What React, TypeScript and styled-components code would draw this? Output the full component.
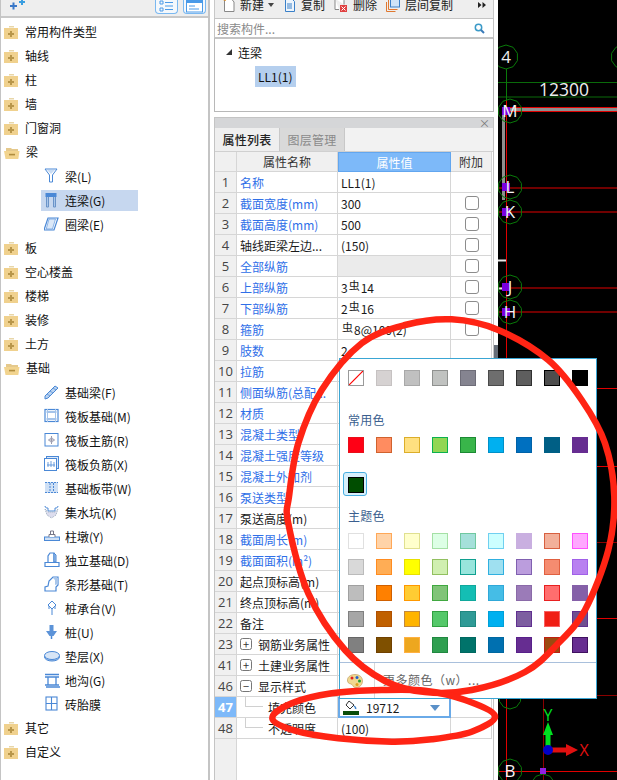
import React from "react";
import styled, { createGlobalStyle } from "styled-components";

const Global = createGlobalStyle`
  html, body { margin: 0; padding: 0; background: #fff; }
  body { font-family: "Noto Sans CJK SC", "Liberation Sans", sans-serif; font-size: 12px; color: #111; }
  * { box-sizing: border-box; }
`;

const Page = styled.div`
  position: relative; display: flex; width: 617px; height: 780px; overflow: hidden; background: #fff;
`;

/* left tree */
const LeftPanel = styled.div`
  width: 210px; flex: none; display: flex; flex-direction: column;
  border-left: 1px solid #c4c4c4; border-right: 2px solid #c4c4c4;
`;
const LeftBar = styled.div`
  height: 18px; flex: none; display: flex; align-items: flex-start; background: #eeeeee;
  border-bottom: 2px solid #c8c8c8; padding: 0 2px 0 6px; overflow: hidden;
`;
const BarButton = styled.div`
  width: 23px; height: 15px; margin-top: -1px; border: 1px solid #7ab8f0; border-top: none;
  border-radius: 0 0 4px 4px; background: #f4f8fc; margin-left: 5px; display: flex; align-items: center; justify-content: center;
`;
const Spring = styled.div`flex: 1;`;
const TreeList = styled.div`padding-top: 2px; display: flex; flex-direction: column;`;
const FolderRow = styled.div`
  height: 24px; display: flex; align-items: center; padding-left: 3px; gap: 6px; line-height: 24px; white-space: nowrap;
`;
const LeafRow = styled.div<{ $sel?: boolean }>`
  height: 24px; display: flex; align-items: center; padding-left: 40px; white-space: nowrap;
  & > span { display: flex; align-items: center; height: 21px; width: 97px; gap: 5px; padding-left: 3px; background: ${(p) => (p.$sel ? "#c6d7ef" : "transparent")}; }
`;

const Folder = ({ open }: { open?: boolean }) =>
  open ? (
    <svg width="16" height="13" viewBox="0 0 16 13">
      <path d="M2 2h5l1 1h6v2H2z" fill="#e5c98c" />
      <path d="M0 5h15.500l-1.200 8H1.500z" fill="#f2d48f" />
      <rect x="5" y="7.800" width="6" height="1.600" fill="#b08d3e" />
    </svg>
  ) : (
    <svg width="15" height="13" viewBox="0 0 15 13">
      <path d="M5 0h5v1.500H5z" fill="#e8d6a8" />
      <rect x="0" y="2" width="14" height="11" fill="#f0d18e" />
      <rect x="6" y="5" width="2" height="6" fill="#b8964a" />
      <rect x="4" y="7" width="6" height="2" fill="#b8964a" />
    </svg>
  );

const B = "#4a88d6";
const leafIcons: Record<string, React.ReactNode> = {
  liang: <><path d="M1 1h12L8.500 7v7h-3V7z" fill="none" stroke={B} /><path d="M3 2h8L7 6z" fill="#c9dcf3" /></>,
  lian: <><rect x="1.500" y="1" width="11" height="4" fill={B} /><path d="M2.500 5v10h2V5M9.500 5v10h2V5" fill="#a9c6ea" stroke="#6a93c8" /></>,
  quan: <><path d="M4 2h10l-4 12H0z" fill="none" stroke={B} strokeWidth="1.200" /><path d="M5 3h6.500l-3 10H2.200z" fill="#dbe8f8" stroke={B} strokeWidth=".6" /></>,
  jcl: <><path d="M1 12L11 2l3 2L4 14l-3 1z" fill="#b9d2f0" stroke={B} /><path d="M3 10l3 2M6 7l3 2M9 4l3 2" stroke={B} strokeWidth=".7" /></>,
  fb: <><rect x="1" y="1.500" width="13" height="12" fill="#fff" stroke={B} strokeWidth="1.200" /><rect x="3.500" y="4" width="8" height="7" fill="none" stroke={B} /><path d="M1 4h13M1 11h13M3.500 1v13M11.500 1v13" stroke="#a5c4ea" /></>,
  zj: <><rect x="1" y="1.500" width="13" height="12.500" fill="#fff" stroke={B} /><path d="M7.500 4v8M4 8h7" stroke="#99a" strokeWidth="1" /><circle cx="7.500" cy="8" r="2" fill="none" stroke="#aab" /></>,
  fj: <><rect x="2.500" y="0.500" width="12" height="12" fill="#dbe8f8" stroke={B} /><rect x="0.500" y="2.500" width="12" height="12" fill="#fff" stroke={B} /><path d="M4 6v5M7 5v6M10 6v5M3 9h8" stroke={B} strokeWidth=".8" /></>,
  bd: <><rect x="1" y="2" width="13" height="11" fill="#cfe0f5" /><path d="M1 2.500h13M1 12.500h13M6 3v9M9.500 3v9" stroke={B} strokeDasharray="2 1" /></>,
  jsk: <><path d="M1 2c0 2 2 2 3 2v3h7V4c1 0 3 0 3-2" fill="none" stroke={B} /><path d="M1 5l2 6 4.500 3L12 11l2-6-3 3H4z" fill="#dde" stroke="#9ab" strokeDasharray="1 1" /></>,
  zd: <><rect x="0.500" y="9" width="15" height="3.500" fill="#cfe0f5" stroke={B} /><path d="M5 9V6.500h6V9M6.500 6V3h3v3" fill="#fff" stroke="#778" /></>,
  dl: <><path d="M1 10.500h14v4H1z" fill="#fff" stroke={B} strokeWidth="1.200" /><path d="M4 10V4l2-3h4v9" fill="#fff" stroke={B} strokeWidth="1.200" /><path d="M10 1l2 2v7h-2z" fill="#a9c6ea" stroke={B} /></>,
  tx: <><path d="M1 15v-4l3-1 1-5 4-4h5v8l-2 2v4z" fill="#fff" stroke={B} strokeWidth="1.200" /><path d="M9 2l2 2v5l3-1V2z" fill="#a9c6ea" /></>,
  cct: <><path d="M8 1l4 4-4 4-4-4z" fill="#fff" stroke={B} /><path d="M5 6v3M8 8v7M11 6v3M5 6l3 3 3-3" fill="none" stroke={B} /></>,
  z: <><path d="M5.500 1h4v6H13l-3.500 5h-4L2 7h3.500z" fill="#5c93d8" /><path d="M7.500 12v3" stroke={B} strokeWidth="1.500" /></>,
  dc: <><ellipse cx="8" cy="9" rx="7.500" ry="4" fill="#a9c6ea" stroke={B} /><ellipse cx="8" cy="7.500" rx="7.500" ry="4" fill="#d7e5f6" stroke={B} /></>,
  dg: <><path d="M1 2.500h14M2 15h14" stroke={B} strokeWidth="1.500" /><path d="M1 5h14M4 5v8M12 5v8M1 13h14" fill="none" stroke={B} strokeWidth="1.300" /></>,
  ztm: <><rect x="2" y="1" width="11" height="13" fill="#fff" stroke={B} strokeWidth="1.100" /><path d="M2 7.500h11M7.500 1v13" stroke={B} strokeWidth="1.100" /></>,
};

const tree: [string, string?, string?, boolean?][] = [
  ["f", "常用构件类型"], ["f", "轴线"], ["f", "柱"], ["f", "墙"], ["f", "门窗洞"], ["o", "梁"],
  ["l", "梁(L)", "liang"], ["l", "连梁(G)", "lian", true], ["l", "圈梁(E)", "quan"],
  ["f", "板"], ["f", "空心楼盖"], ["f", "楼梯"], ["f", "装修"], ["f", "土方"], ["o", "基础"],
  ["l", "基础梁(F)", "jcl"], ["l", "筏板基础(M)", "fb"], ["l", "筏板主筋(R)", "zj"], ["l", "筏板负筋(X)", "fj"],
  ["l", "基础板带(W)", "bd"], ["l", "集水坑(K)", "jsk"], ["l", "柱墩(Y)", "zd"], ["l", "独立基础(D)", "dl"],
  ["l", "条形基础(T)", "tx"], ["l", "桩承台(V)", "cct"], ["l", "桩(U)", "z"], ["l", "垫层(X)", "dc"],
  ["l", "地沟(G)", "dg"], ["l", "砖胎膜", "ztm"], ["f", "其它"], ["f", "自定义"],
];

/* centre column */
const Middle = styled.div`
  width: 280px; margin-left: 4px; flex: none; display: flex; flex-direction: column;
`;
const Toolbar = styled.div`
  height: 18px; flex: none; display: flex; align-items: center; background: #eeeeee; padding: 0 4px 8px 7px;
  border-left: 1px solid #c8c8c8; border-right: 1px solid #c8c8c8; font-size: 12px; color: #222;
`;
const Tool = styled.div<{ $gap?: number }>`display: flex; align-items: center; gap: ${(p) => p.$gap ?? 4}px; margin-right: 9px; line-height: 12px; white-space: nowrap;`;
const Caret = styled.span`
  width: 0; height: 0; border-left: 3.500px solid transparent; border-right: 3.500px solid transparent; border-top: 4px solid #444;
`;
const More = styled.svg`margin-left: auto; margin-right: 3px; flex: none;`;
const Search = styled.div`
  height: 19px; flex: none; display: flex; align-items: center; justify-content: space-between; padding: 0 8px 0 2px;
  border: 1px solid #c4c4c4; border-bottom: none; color: #8a8a8a; background: #fff;
`;
const TreeBox = styled.div`
  height: 75px; flex: none; border: 1px solid #b8b8b8; border-top: 2px solid #c4c4c4; padding-top: 2px; background: #fff;
`;
const BeamHead = styled.div`display: flex; align-items: center; height: 22px; gap: 6px; padding-left: 11px;`;
const Tri = styled.span`
  width: 0; height: 0; border-left: 6px solid transparent; border-bottom: 6px solid #333;
`;
const BeamItem = styled.div`
  margin: 3px 0 0 40px; width: 41px; height: 21px; line-height: 21px; padding-left: 3px; background: #b5cfee; white-space: nowrap;
`;
const PropPanel = styled.div`
  flex: 1; margin-top: 5px; display: flex; flex-direction: column; border: 1px solid #c4c4c4; border-bottom: none; min-height: 0;
`;
const PanelTitle = styled.div`
  height: 10px; flex: none; background: #d5d6d8; display: flex; align-items: center; justify-content: flex-end; padding-right: 3px;
  font-size: 11px; color: #777; line-height: 10px;
`;
const Tabs = styled.div`height: 24px; flex: none; display: flex; background: #f2f2f2; border-bottom: 1px solid #d0d0d0;`;
const Tab = styled.div<{ $active?: boolean }>`
  width: 65px; height: 23px; display: flex; align-items: center; justify-content: center;
  background: ${(p) => (p.$active ? "#efefef" : "#d9d9d9")}; color: ${(p) => (p.$active ? "#222" : "#8a8a8a")};
  font-weight: ${(p) => (p.$active ? 500 : 400)}; border-right: 1px solid #c8c8c8; letter-spacing: .3px;
`;
const GridRow = styled.div<{ $h: number }>`
  height: ${(p) => p.$h}px; flex: none; display: grid; grid-template-columns: 22px 101px 113px 41px; width: 277px;
`;
const Cell = styled.div`
  display: flex; align-items: center; border-right: 1px solid #d6d6d6; border-bottom: 1px solid #d6d6d6; white-space: nowrap; overflow: hidden; min-width: 0;
`;
const HeadCell = styled(Cell)<{ $on?: boolean }>`
  justify-content: center; background: ${(p) => (p.$on ? "#7db9f9" : "#f0f0f0")}; color: ${(p) => (p.$on ? "#fff" : "#333")};
  ${(p) => (p.$on ? "border: 1px solid #62a6ef;" : "")}
`;
const NumCell = styled(Cell)<{ $on?: boolean }>`
  justify-content: center; background: ${(p) => (p.$on ? "#7db9f9" : "#f0f0f0")}; color: ${(p) => (p.$on ? "#fff" : "#444")};
  font-size: 13px; font-weight: ${(p) => (p.$on ? 700 : 400)}; font-family: "Open Sans", sans-serif;
`;
const NameCell = styled(Cell)<{ $blue?: boolean; $indent: number }>`
  color: ${(p) => (p.$blue ? "#2f6fe8" : "#1a1a1a")}; padding-left: ${(p) => p.$indent}px; gap: 6px; position: relative;
`;
const ValCell = styled(Cell)<{ $grey?: boolean; $selected?: boolean }>`
  padding-left: 3px; background: ${(p) => (p.$grey ? "#ebebeb" : "#fff")}; color: #1a1a1a;
  ${(p) => (p.$selected ? "border: 2px solid #6aaae8; padding-left: 3px; gap: 7px; position: relative;" : "")}
`;
const AddCell = styled(Cell)`justify-content: center; padding-left: 1px;`;
const Check = styled.span`
  width: 14px; height: 14px; border: 1px solid #8c8c8c; border-radius: 3px; background: #fff;
`;
const Expand = styled.span`
  width: 12px; height: 12px; border: 1px solid #777; border-radius: 2.500px; font-size: 11px; line-height: 9px; display: flex; align-items: center; justify-content: center; color: #333; flex: none;
`;
const Steel = styled.span`font-size: 11px; position: relative; top: -3px; margin: 0 1px;`;
const Branch = styled.span<{ $tall?: boolean }>`
  position: absolute; left: 8px; top: ${(p) => (p.$tall ? -14 : -1)}px; width: 18px; height: ${(p) => (p.$tall ? 24 : 11)}px;
  border-left: 1px solid #d0d0d0; border-bottom: 1px solid #d0d0d0;
`;
const DownArrow = styled.span`
  position: absolute; right: 9px; top: 6px; width: 0; height: 0; border-left: 5px solid transparent; border-right: 5px solid transparent; border-top: 6px solid #5a90c8;
`;
const Filler = styled.div`
  flex: 1; width: 22px; background: #f0f0f0; border-right: 1px solid #d6d6d6;
`;
const Gutter = styled.div`
  width: 4px; flex: none; background: #fff; padding-top: 345px;
`;
const GutterBar = styled.div`height: 20px; background: #666e78;`;

const Canvas = styled.div`flex: 1; background: #000; min-width: 0; height: 780px;`;

/* colour popup */
const Popup = styled.div`
  position: absolute; left: 339px; top: 358px; width: 258px; height: 341px; background: #fff;
  border: 1px solid #3aa6d4; padding-top: 11px;
`;
const SwatchRow = styled.div<{ $mt?: number }>`
  display: grid; grid-template-columns: repeat(9, 16px); column-gap: 12px; padding-left: 8px; margin-top: ${(p) => p.$mt ?? 0}px; height: 16px;
`;
const Swatch = styled.div<{ $fill: string; $line: string }>`
  width: 16px; height: 16px; background: ${(p) => p.$fill}; border: 1px solid ${(p) => p.$line}; position: relative; overflow: hidden;
`;
const Picked = styled.div`
  position: absolute; left: -5px; top: -5px; width: 24px; height: 24px; border: 1px solid #48aee0; border-radius: 3px; background: #d7effb; z-index: 0;
`;
const SwatchSlot = styled.div`position: relative; width: 16px; height: 16px;`;
const PickedFill = styled(Swatch)`position: relative; z-index: 1;`;
const GroupLabel = styled.div<{ $mt: number }>`
  height: 16px; line-height: 16px; padding-left: 8px; margin-top: ${(p) => p.$mt}px; color: #3b5f8f; letter-spacing: .2px;
`;
const PopFoot = styled.div`
  margin-top: 9px; height: 36px; border-top: 1px solid #a9c0dc; display: flex; align-items: stretch;
`;
const FootIcon = styled.div`
  width: 35px; flex: none; border-right: 1px solid #d8d8d8; display: flex; align-items: center; justify-content: center; padding-right: 4px;
`;
const FootText = styled.div`padding: 0 0 2px 8px; display: flex; align-items: center; color: #666; letter-spacing: .5px; white-space: nowrap;`;

const Marks = styled.svg`position: absolute; left: 0; top: 0; width: 617px; height: 780px; pointer-events: none;`;

const top9: [string, string][] = [
  ["#d6d2d2", "#c6c2c2"], ["#c0c0c0", "#a8a8a8"], ["#c0c2c0", "#8f918f"], ["#858490", "#6e6d78"], ["#6e6e6e", "#4a4a4a"],
  ["#5e5e5e", "#303030"], ["#4d4d4d", "#000"], ["#000", "#000"],
];
const common: [string, string][] = [
  ["#ff0015", "#e8101a"], ["#ff8c60", "#d0622e"], ["#ffe080", "#dcae2a"], ["#92d655", "#0bb14f"], ["#39b54a", "#1b8a33"],
  ["#00b0f0", "#0090c8"], ["#0070c0", "#0062a8"], ["#005f85", "#005f85"], ["#662d91", "#662d91"],
];
const theme: [string, string][][] = [
  [["#fff", "#e0e0e0"], ["#ffd3a8", "#ffa858"], ["#ffffcc", "#e0e090"], ["#ddffe6", "#a5e0a5"], ["#a5e0da", "#70c8a0"], ["#ccffff", "#70d0f0"], ["#c9afe0", "#c9afe0"], ["#f2b09a", "#d86040"], ["#ffa8ff", "#ff50ff"]],
  [["#d9d9d9", "#bbb"], ["#ffad55", "#ff8c20"], ["#ffff00", "#e8e000"], ["#d0efb0", "#92c060"], ["#98e5dc", "#10a090"], ["#9fe0f0", "#30b0e0"], ["#bb9ddd", "#8060b0"], ["#f58c70", "#e06040"], ["#b880f0", "#a060e8"]],
  [["#bdbdbd", "#a0a0a0"], ["#ff8000", "#d06000"], ["#ffcc33", "#ff9800"], ["#80c478", "#40a840"], ["#14beb4", "#10a89c"], ["#45bde6", "#30a8d8"], ["#9b7bb8", "#8a6aa8"], ["#ff6e6e", "#e82020"], ["#8560a8", "#8560a8"]],
  [["#a6a6a6", "#808080"], ["#c06000", "#b05000"], ["#ffb400", "#c08840"], ["#55c86a", "#30a040"], ["#2f9a96", "#208880"], ["#00b0f0", "#00a0d8"], ["#7d5ea0", "#602f90"], ["#f01e14", "#f86060"], ["#6f5090", "#603090"]],
  [["#808080", "#666"], ["#7f5000", "#704000"], ["#eda71f", "#ffb040"], ["#2f9f50", "#208840"], ["#00736a", "#006860"], ["#0070b0", "#0068a0"], ["#662d91", "#58208a"], ["#9c4a10", "#c02010"], ["#662d91", "#401060"]],
];

type Row = {
  n: string; name: string; blue?: boolean; val?: React.ReactNode; check?: boolean; grey?: boolean;
  expand?: "+" | "-"; branch?: "short" | "tall"; selected?: boolean;
};
const S = () => <Steel>虫</Steel>;
const rows: Row[] = [
  { n: "1", name: "名称", blue: true, val: "LL1(1)" },
  { n: "2", name: "截面宽度(mm)", blue: true, val: "300", check: true },
  { n: "3", name: "截面高度(mm)", blue: true, val: "500", check: true },
  { n: "4", name: "轴线距梁左边...", val: "(150)", check: true },
  { n: "5", name: "全部纵筋", blue: true, grey: true, check: true },
  { n: "6", name: "上部纵筋", blue: true, val: <span>3<S />14</span>, check: true },
  { n: "7", name: "下部纵筋", blue: true, val: <span>2<S />16</span>, check: true },
  { n: "8", name: "箍筋", blue: true, val: <span><S />8@100(2)</span>, check: true },
  { n: "9", name: "肢数", blue: true, val: "2" },
  { n: "10", name: "拉筋", blue: true },
  { n: "11", name: "侧面纵筋(总配...", blue: true },
  { n: "12", name: "材质", blue: true },
  { n: "13", name: "混凝土类型", blue: true },
  { n: "14", name: "混凝土强度等级", blue: true },
  { n: "15", name: "混凝土外加剂", blue: true },
  { n: "16", name: "泵送类型", blue: true },
  { n: "17", name: "泵送高度(m)" },
  { n: "18", name: "截面周长(m)", blue: true },
  { n: "19", name: "截面面积(m²)", blue: true },
  { n: "20", name: "起点顶标高(m)" },
  { n: "21", name: "终点顶标高(m)" },
  { n: "22", name: "备注" },
  { n: "23", name: "钢筋业务属性", expand: "+" },
  { n: "41", name: "土建业务属性", expand: "+" },
  { n: "46", name: "显示样式", expand: "-" },
  { n: "47", name: "填充颜色", branch: "short", selected: true },
  { n: "48", name: "不透明度", branch: "tall", val: "(100)" },
];

const ring = (cx: number, cy: number, r: number) =>
  Array.from({ length: 10 }, (_, i) => {
    const a = (Math.PI * 2 * i) / 10 - Math.PI / 2;
    return `${(cx + r * Math.cos(a)).toFixed(1)},${(cy + r * Math.sin(a)).toFixed(1)}`;
  }).join(" ");

/* closed smooth curve through hand-traced points (the reviewer's red pen marks) */
const smooth = (p: [number, number][]) => {
  const n = p.length;
  let d = `M${p[0][0]} ${p[0][1]}`;
  for (let i = 0; i < n; i++) {
    const [a, b, c, e] = [p[(i - 1 + n) % n], p[i], p[(i + 1) % n], p[(i + 2) % n]];
    d += `C${(b[0] + (c[0] - a[0]) / 6).toFixed(1)} ${(b[1] + (c[1] - a[1]) / 6).toFixed(1)} ${(c[0] - (e[0] - b[0]) / 6).toFixed(1)} ${(c[1] - (e[1] - b[1]) / 6).toFixed(1)} ${c[0]} ${c[1]}`;
  }
  return d + "Z";
};
const bigMark: [number, number][] = [
  [451.7, 319.3], [498.3, 330], [548.3, 360], [581.7, 400], [605, 443.3], [614.3, 496.7], [608.3, 550], [585, 610],
  [558.3, 643.3], [525, 672], [471.7, 690], [425, 692], [385, 681], [345, 650], [308.3, 593.3], [288.3, 523.3],
  [289, 496.7], [298.3, 443.3], [321.7, 390], [361.7, 343.3], [405, 325],
];
const smallMark: [number, number][] = [
  [495, 716], [471.7, 731.7], [431.7, 739.3], [391.7, 741.7], [338.3, 738.3], [295, 730.7], [272.3, 718.3],
  [291.7, 703.3], [331.7, 693.3], [381.7, 690], [425, 690.7], [465, 700],
];

const RED = "#e00000";
const GREEN = "#0a7a0a";
const LABEL = "Open Sans, sans-serif";

const Grid = () => {
  const axes: [number, number, string][] = [
    [510, 111, "M"], [510, 187, "L"], [510, 212, "K"], [510, 287, "J"], [510, 312, "H"],
  ];
  return (
    <svg width="119" height="780" viewBox="498 0 119 780" style={{ display: "block" }}>
      <path d="M498 82.500H617M498 97H617" stroke="#0a6a0a" strokeWidth="1" />
      <path d="M506.500 69V100" stroke={GREEN} />
      <path d="M506.500 100V780" stroke={RED} />
      <path d="M506 107.500H617M506 111.500H617M498 188H617M498 212H617M498 288H617M498 312H617M506 388.500H617M506 466.500H617M506 618.500H617M498 771.500H617" stroke={RED} />
      <path d="M506 542.500H617M506 695.500H617" stroke="#8a0000" />
      <path d="M543.500 696V780" stroke="#8a0000" />
      <path d="M503.500 200V109.500H617" fill="none" stroke="#8e8e8e" strokeWidth="3" />
      <path d="M498 260.500H506M498 288.500H506" stroke="#e8e8e8" strokeWidth="2" />
      <polygon points={ring(506, 57, 12)} fill="none" stroke={GREEN} />
      <polygon points={ring(623, 57, 12)} fill="none" stroke={GREEN} />
      <text x="506" y="63" fontFamily={LABEL} fontSize="17" fill="#eee" textAnchor="middle">4</text>
      <text x="564" y="96" fontFamily={LABEL} fontSize="17.500" fill="#eee" textAnchor="middle">12300</text>
      {axes.map(([x, y, t]) => (
        <g key={t}>
          <rect x="502" y={y - 4} width="8" height="8" fill="#7a00e0" />
          <polygon points={ring(x, y, 12)} fill="none" stroke={GREEN} />
          <text x={x} y={y + 6} fontFamily={LABEL} fontSize="17" fill="#f4f4f4" textAnchor="middle">{t}</text>
        </g>
      ))}
      <polygon points={ring(510, 771, 12)} fill="none" stroke={GREEN} />
      <text x="510" y="777" fontFamily={LABEL} fontSize="17" fill="#f4f4f4" textAnchor="middle">B</text>
      <polygon points={ring(510, 698, 11)} fill="none" stroke={GREEN} />
      <polygon points={ring(543, 786, 12)} fill="none" stroke={GREEN} />
      <rect x="540" y="768" width="6" height="6" fill="#9020e0" />
      <path d="M548 748V730" stroke="#00e020" strokeWidth="5" />
      <path d="M543 735L548 722l5 13z" fill="#00e020" />
      <path d="M552 750H568" stroke="#e01010" strokeWidth="5" />
      <path d="M566 744l12 6-12 6z" fill="#e01010" />
      <circle cx="548" cy="750" r="5" fill="#0000c8" />
      <text x="548" y="721" fontFamily={LABEL} fontSize="16" fill="#00e020" textAnchor="middle">Y</text>
      <text x="584" y="756" fontFamily={LABEL} fontSize="16" fill="#e01010" textAnchor="middle">X</text>
    </svg>
  );
};

export default function App() {
  return (
    <Page>
      <Global />
      <LeftPanel>
        <LeftBar>
          <svg width="22" height="12" viewBox="0 0 22 12" style={{ marginLeft: 1, marginTop: -1 }}>
            <path d="M2 7h7M5.500 3.500v7" stroke="#3a78c8" strokeWidth="2" />
            <path d="M11 3h6M14 0v6" stroke="#3a9ee0" strokeWidth="2" />
          </svg>
          <Spring />
          <BarButton>
            <svg width="15" height="13" viewBox="0 0 15 13">
              <path d="M1 1h3v3H1zM1 8h3v3H1z" fill="none" stroke="#4a9ae8" />
              <path d="M6 2.500h8M6 9.500h8M6 6h8" stroke="#4a9ae8" />
            </svg>
          </BarButton>
          <BarButton>
            <svg width="17" height="13" viewBox="0 0 17 13">
              <rect x="0.500" y="0" width="16" height="12" fill="#fff" stroke="#4a9ae8" />
              <rect x="1" y="0" width="15" height="3" fill="#4a9ae8" />
              <path d="M3 6h6M3 9h10" stroke="#4a9ae8" />
            </svg>
          </BarButton>
        </LeftBar>
        <TreeList>
          {tree.map(([k, label, icon, sel]) =>
            k === "l" ? (
              <LeafRow key={label} $sel={sel}>
                <span>
                  <svg width="16" height="16" viewBox="0 0 16 16">{leafIcons[icon!]}</svg>
                  {label}
                </span>
              </LeafRow>
            ) : (
              <FolderRow key={label}>
                <Folder open={k === "o"} />
                {label}
              </FolderRow>
            )
          )}
        </TreeList>
      </LeftPanel>

      <Middle>
        <Toolbar>
          <Tool>
            <svg width="14" height="14" viewBox="0 0 14 14"><path d="M2.500 1h7l2.500 3v9.500H2.500z" fill="#fff" stroke="#888" /><path d="M1 1l3 1" stroke="#e89020" strokeWidth="2" /></svg>
            新建<Caret />
          </Tool>
          <Tool>
            <svg width="14" height="14" viewBox="0 0 14 14"><path d="M2.500 0.500h6l3 3v10h-9z" fill="#eef5fc" stroke="#3a80c8" /><path d="M4 6h5M4 8h5M4 10h5" stroke="#3a80c8" /></svg>
            复制
          </Tool>
          <Tool $gap={5}>
            <svg width="14" height="14" viewBox="0 0 14 14"><path d="M1 0.500h7l2 2v4M1 0.500v11h4" fill="#fff" stroke="#888" /><rect x="6" y="7" width="7" height="7" fill="#e04040" /><path d="M7.500 8.500l4 4M11.500 8.500l-4 4" stroke="#fff" /></svg>
            删除
          </Tool>
          <Tool $gap={5}>
            <svg width="14" height="14" viewBox="0 0 14 14"><path d="M0.500 4v9.500h9" fill="none" stroke="#e07830" /><path d="M2.500 2v9.500h9" fill="none" stroke="#e07830" /><rect x="4.500" y="0" width="9" height="9" fill="#cfe4f8" stroke="#3a80c8" /></svg>
            层间复制
          </Tool>
          <More width="8" height="6" viewBox="0 0 8 6"><path d="M0 0l3.500 3L0 6zM4.500 0L8 3 4.500 6z" fill="#222" /></More>
        </Toolbar>
        <Search>
          搜索构件...
          <svg width="11" height="11" viewBox="0 0 11 11"><circle cx="4.500" cy="4.500" r="3.200" fill="none" stroke="#3a9ac8" strokeWidth="1.500" /><path d="M7 7l3 3" stroke="#3a7ab8" strokeWidth="2" /></svg>
        </Search>
        <TreeBox>
          <BeamHead><Tri />连梁</BeamHead>
          <BeamItem>LL1(1)</BeamItem>
        </TreeBox>
        <PropPanel>
          <PanelTitle>×</PanelTitle>
          <Tabs>
            <Tab $active>属性列表</Tab>
            <Tab>图层管理</Tab>
          </Tabs>
          <GridRow $h={20}>
            <HeadCell />
            <HeadCell>属性名称</HeadCell>
            <HeadCell $on>属性值</HeadCell>
            <HeadCell>附加</HeadCell>
          </GridRow>
          {rows.map((r) => (
            <GridRow key={r.n} $h={21}>
              <NumCell $on={r.selected}>{r.n}</NumCell>
              <NameCell $blue={r.blue} $indent={r.branch ? 31 : 3}>
                {r.branch && <Branch $tall={r.branch === "tall"} />}
                {r.expand && <Expand>{r.expand === "+" ? "+" : "−"}</Expand>}
                {r.name}
              </NameCell>
              <ValCell $grey={r.grey} $selected={r.selected}>
                {r.selected ? (
                  <>
                    <svg width="16" height="15" viewBox="0 0 16 15">
                      <path d="M6 1l5 4-4 4-4-4z" fill="#fff" stroke="#333" />
                      <path d="M11 6c1.500 1 2 2 1.500 3" stroke="#3a80c8" strokeWidth="1.500" fill="none" />
                      <rect x="0" y="11" width="16" height="4" fill="#0a4d0a" />
                    </svg>
                    19712
                    <DownArrow />
                  </>
                ) : (
                  r.val
                )}
              </ValCell>
              <AddCell>{r.check && <Check />}</AddCell>
            </GridRow>
          ))}
          <Filler />
        </PropPanel>
      </Middle>
      <Gutter><GutterBar /></Gutter>
      <Canvas><Grid /></Canvas>

      <Popup>
        <SwatchRow>
          <Swatch $fill="#fff" $line="#9a9a9a">
            <svg width="14" height="14" viewBox="0 0 14 14" style={{ display: "block" }}><path d="M0 14L14 0" stroke="#ff0000" strokeWidth="1.200" /></svg>
          </Swatch>
          {top9.map(([f, l], i) => <Swatch key={i} $fill={f} $line={l} />)}
        </SwatchRow>
        <GroupLabel $mt={26}>常用色</GroupLabel>
        <SwatchRow $mt={9}>
          {common.map(([f, l], i) => <Swatch key={i} $fill={f} $line={l} />)}
        </SwatchRow>
        <SwatchRow $mt={24}>
          <SwatchSlot>
            <Picked />
            <PickedFill $fill="#004d00" $line="#000" />
          </SwatchSlot>
        </SwatchRow>
        <GroupLabel $mt={15}>主题色</GroupLabel>
        {theme.map((row, r) => (
          <SwatchRow key={r} $mt={r === 0 ? 9 : 10}>
            {row.map(([f, l], i) => <Swatch key={i} $fill={f} $line={l} />)}
          </SwatchRow>
        ))}
        <PopFoot>
          <FootIcon>
            <svg width="16" height="14" viewBox="0 0 16 14">
              <path d="M8 0.500C3 0.500 0 3.500 0.500 7c.5 3 3 2.500 4.500 3.500 1 1 1 3 4 3 4 0 6.500-3 6.500-6.500S13 .5 8 .5z" fill="#f0d890" stroke="#b89050" strokeWidth=".6" />
              <circle cx="5" cy="4" r="1.500" fill="#e02020" /><circle cx="10" cy="3.500" r="1.500" fill="#2060d0" /><circle cx="12.500" cy="7" r="1.500" fill="#20a030" /><circle cx="10" cy="10.500" r="1.500" fill="#e0a020" />
            </svg>
          </FootIcon>
          <FootText>更多颜色（w）...</FootText>
        </PopFoot>
      </Popup>

      <Marks viewBox="0 0 617 780">
        <path d={smooth(bigMark)} fill="none" stroke="#ff2414" strokeWidth="6.500" />
        <path d={smooth(smallMark)} fill="none" stroke="#ff2414" strokeWidth="6.500" />
      </Marks>
    </Page>
  );
}
